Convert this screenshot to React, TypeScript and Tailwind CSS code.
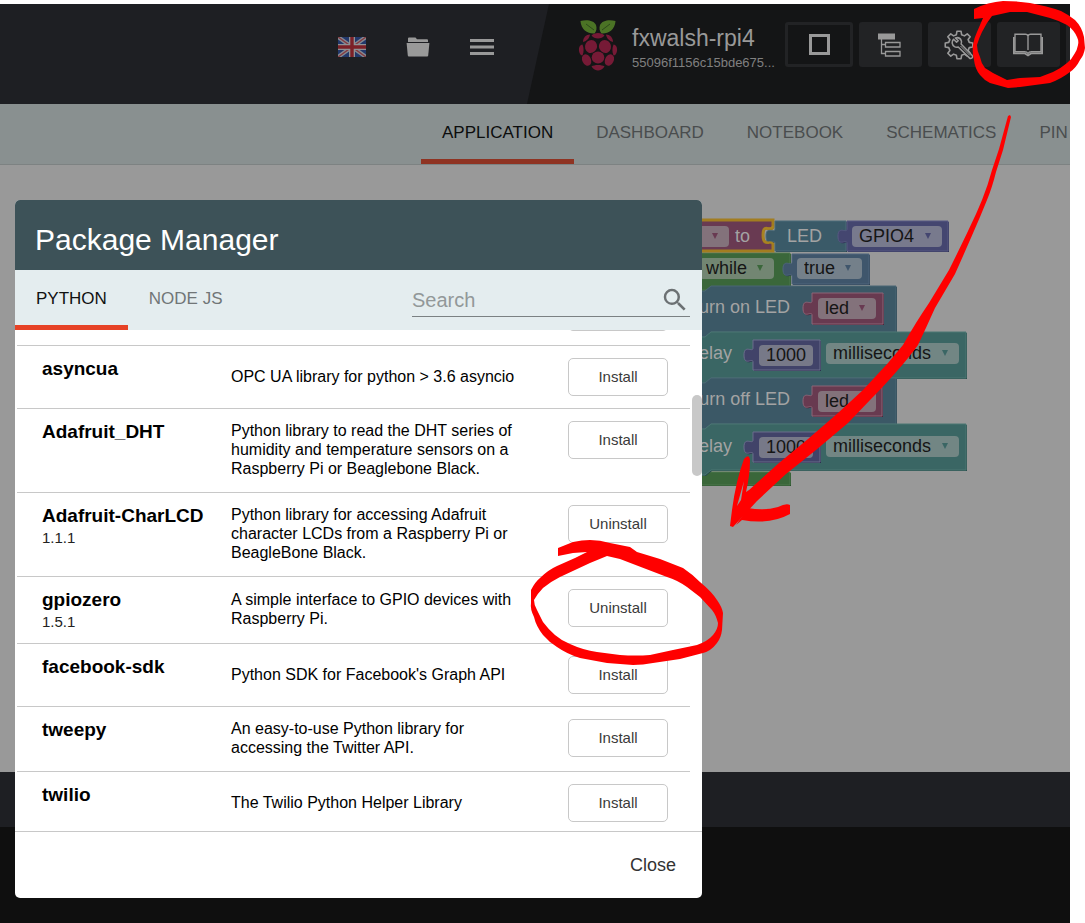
import React from "react";
import { MdSearch } from "react-icons/md";

type Pkg = { name: string; version?: string; description: string; installed?: boolean };

const packages: Pkg[] = [
  { name: "asyncua", description: "OPC UA library for python > 3.6 asyncio" },
  {
    name: "Adafruit_DHT",
    description:
      "Python library to read the DHT series of humidity and temperature sensors on a Raspberry Pi or Beaglebone Black.",
  },
  {
    name: "Adafruit-CharLCD",
    version: "1.1.1",
    description:
      "Python library for accessing Adafruit character LCDs from a Raspberry Pi or BeagleBone Black.",
    installed: true,
  },
  {
    name: "gpiozero",
    version: "1.5.1",
    description: "A simple interface to GPIO devices with Raspberry Pi.",
    installed: true,
  },
  { name: "facebook-sdk", description: "Python SDK for Facebook's Graph API" },
  { name: "tweepy", description: "An easy-to-use Python library for accessing the Twitter API." },
  { name: "twilio", description: "The Twilio Python Helper Library" },
];

function FlagIcon() {
  return (
    <svg viewBox="0 0 28 20" className="h-5 w-7" aria-hidden="true">
      <rect width="28" height="20" fill="#22386b" />
      <path d="M0 0L28 20M28 0L0 20" stroke="#858a92" strokeWidth="4" />
      <path d="M0 0L28 20M28 0L0 20" stroke="#85393f" strokeWidth="1.4" />
      <path d="M14 0V20M0 10H28" stroke="#8f9094" strokeWidth="6" />
      <path d="M14 0V20M0 10H28" stroke="#7c2027" strokeWidth="3.4" />
    </svg>
  );
}

function FolderIcon() {
  return (
    <svg viewBox="0 0 24 20" className="h-5 w-6" fill="#999999" aria-hidden="true">
      <path d="M2 1.5Q2 .5 3 .5H9.5L11 2.3H21Q22 2.3 22 3.3V5H2Z" />
      <path d="M.6 6H23.4L22.2 18.6Q22.1 19.6 21.2 19.6H2.8Q1.9 19.6 1.8 18.6Z" />
    </svg>
  );
}

function MenuIcon() {
  return (
    <svg viewBox="0 0 24 18" className="h-[18px] w-6" fill="#999999" aria-hidden="true">
      <path d="M0 1H24V4H0ZM0 7.5H24V10.5H0ZM0 14H24V17H0Z" />
    </svg>
  );
}

function RaspberryIcon() {
  return (
    <svg viewBox="0 0 40 52" className="h-[52px] w-10 shrink-0" aria-hidden="true">
      <g fill="#4b7325">
        <path d="M2.500 2C8 .3 16 1 18 6C19 9 18.6 12 16.5 14.5C10 15 3 11 2.500 2Z" />
        <path d="M37.500 2C32 .3 24 1 22 6C21 9 21.400 12 23.500 14.500C30 15 37 11 37.500 2Z" />
      </g>
      <path d="M8 5L16 11M32 5L24 11" stroke="#2c4a1b" strokeWidth="1" fill="none" />
      <g fill="#761a36">
        <path d="M13.500 16.500C16 13 24 13 26.500 16.500C24 20.500 16 20.500 13.500 16.500Z" />
        <path d="M5 23C5 18.500 8 15.500 12 15.500C11.500 19 9 22 5 23Z" />
        <path d="M35 23C35 18.500 32 15.500 28 15.500C28.500 19 31 22 35 23Z" />
        <ellipse cx="13" cy="27.500" rx="6" ry="6.500" transform="rotate(25 13 27.500)" />
        <ellipse cx="27" cy="27.500" rx="6" ry="6.500" transform="rotate(-25 27 27.500)" />
        <ellipse cx="20" cy="38.500" rx="6.300" ry="6" />
        <path d="M4.500 25.500C1.500 26 .6 29 1 32C1.500 35 3 36.500 4.500 36.500C6 33 6 29 4.500 25.500Z" />
        <path d="M35.500 25.500C38.500 26 39.400 29 39 32C38.500 35 37 36.500 35.500 36.500C34 33 34 29 35.500 25.500Z" />
        <ellipse cx="8.600" cy="41" rx="4.300" ry="6" transform="rotate(-27 8.600 41)" />
        <ellipse cx="31.400" cy="41" rx="4.300" ry="6" transform="rotate(27 31.400 41)" />
        <path d="M13.500 47.500C16 45.500 24 45.500 26.500 47.500C25 50 22 51.500 20 51.500C18 51.500 15 50 13.500 47.500Z" />
      </g>
    </svg>
  );
}

function TreeIcon() {
  return (
    <svg viewBox="0 0 24 24" className="mr-[3px] size-6" aria-hidden="true">
      <path d="M1 .5H18V6.500H1Z" fill="#999999" />
      <path d="M4.500 6V20.500H8M4.500 11.500H8" stroke="#999999" strokeWidth="1.300" fill="none" />
      <path d="M8.500 9.500H23V14H8.500ZM8.500 18.500H23V23H8.500Z" stroke="#999999" strokeWidth="1.300" fill="none" />
    </svg>
  );
}

const gearPath = (() => {
  const pts: string[] = [];
  for (let i = 0; i < 8; i++) {
    const base = (i * Math.PI) / 4 - Math.PI / 2;
    const steps: [number, number][] = [
      [-0.25, 10.6],
      [-0.15, 13.9],
      [0.15, 13.9],
      [0.25, 10.6],
    ];
    for (const [a, r] of steps) {
      pts.push(`${(15 + r * Math.cos(base + a)).toFixed(2)} ${(15 + r * Math.sin(base + a)).toFixed(2)}`);
    }
  }
  return `M${pts.join("L")}Z`;
})();

function GearIcon() {
  return (
    <svg viewBox="0 0 30 30" className="mr-[2px] size-[30px]" fill="none" stroke="#999999" aria-hidden="true">
      <path d={gearPath} strokeWidth="1.600" strokeLinejoin="round" />
      <path
        d="M9.500 9.200L12.600 12.200L14.200 10.800L11.400 7.900C14 7.200 16.500 8.300 17.300 10.800C17.600 12 17.500 13 17.100 14L28 25.200C28.700 26 28.700 27.200 28 27.900C27.200 28.600 26.100 28.600 25.400 27.900L14.200 17C11.500 18 8.800 16.200 8.300 13.500C8 12 8.500 10.400 9.500 9.200Z"
        fill="#222325"
        strokeWidth="1.500"
        strokeLinejoin="round"
      />
      <path d="M16.500 16L26 25.500" strokeWidth="1" />
    </svg>
  );
}

function BookIcon() {
  return (
    <svg viewBox="0 0 30 24" className="mr-[2px] h-6 w-[30px]" fill="none" stroke="#999999" aria-hidden="true">
      <path
        d="M15 3C14.600 1.700 13.700 1.200 12.500 1.200H2V18.700H11.500C13.300 18.700 14.300 19.200 15 20.500C15.700 19.200 16.700 18.700 18.500 18.700H28V1.200H17.500C16.300 1.200 15.400 1.700 15 3ZM15 3V17"
        strokeWidth="1.400"
      />
      <path d="M.9 4V20.400H12L15 22.500L18 20.400H29.100V4" strokeWidth="1.800" />
    </svg>
  );
}

function HeaderButton({ label, children }: { label: string; children?: React.ReactNode }) {
  return (
    <button
      type="button"
      aria-label={label}
      className="flex h-[45px] w-[63px] shrink-0 items-center justify-center rounded-[3px] bg-[#222325]"
    >
      {children}
    </button>
  );
}

function Header() {
  return (
    <header className="flex h-[100px] overflow-hidden bg-[#1e1f23]">
      <div className="flex w-[527px] shrink-0 items-start justify-end gap-10 pt-[33px] pr-[33px]">
        <button type="button" aria-label="Language"><FlagIcon /></button>
        <button type="button" aria-label="Projects"><FolderIcon /></button>
        <button type="button" aria-label="Menu" className="pt-px"><MenuIcon /></button>
      </div>
      <div className="flex min-w-0 flex-1 items-start overflow-hidden bg-[#141516] pt-[18px] pl-[51px] [clip-path:polygon(22px_0,100%_0,100%_100%,0_100%)]">
        <div className="-mt-[3px]"><RaspberryIcon /></div>
        <div className="ml-[14px] w-[153px] shrink-0">
          <div className="text-[23px] leading-8 text-[#999999]">fxwalsh-rpi4</div>
          <div className="text-[13px] leading-[18px] text-[#808080]">55096f1156c15bde675...</div>
        </div>
        <div className="flex gap-[6px]">
          <button
            type="button"
            aria-label="Stop"
            className="flex h-[45px] w-[68px] shrink-0 items-center justify-center rounded-[3px] border-3 border-[#222325]"
          >
            <span className="size-[21px] border-3 border-[#999999]" />
          </button>
          <HeaderButton label="Structure"><TreeIcon /></HeaderButton>
          <HeaderButton label="Settings"><GearIcon /></HeaderButton>
          <HeaderButton label="Packages"><BookIcon /></HeaderButton>
          <HeaderButton label="More" />
        </div>
      </div>
    </header>
  );
}

function Tabs() {
  return (
    <nav className="flex h-[61px] gap-px overflow-hidden border-b border-[#7d8282] bg-[#899090] pl-[421px] text-[17px] whitespace-nowrap text-[#4a4d4e]">
      <a href="#application" className="border-b-5 border-[#8f3322] px-[21px] pt-[17px] leading-6 text-[#0c0d0d]">APPLICATION</a>
      <a href="#dashboard" className="px-[21px] pt-[17px] leading-6">DASHBOARD</a>
      <a href="#notebook" className="px-[21px] pt-[17px] leading-6">NOTEBOOK</a>
      <a href="#schematics" className="px-[21px] pt-[17px] leading-6">SCHEMATICS</a>
      <a href="#pin-layout" className="px-[21px] pt-[17px] leading-6">PIN</a>
    </nav>
  );
}

function Field({ label, value, className, arrow }: { label: string; value: string; className: string; arrow: string }) {
  return (
    <div className={`absolute h-[21px] rounded-[4px] ${className}`}>
      <select
        aria-label={label}
        className="block h-full w-full appearance-none bg-transparent pl-[7px] text-[18px] leading-[21px] text-[#151515]"
      >
        <option>{value}</option>
      </select>
      <svg viewBox="0 0 6 6" className="pointer-events-none absolute top-[7px] right-[11px] size-[6px]" aria-hidden="true">
        <path d="M0 0H6L3 6Z" fill={arrow} />
      </svg>
    </div>
  );
}

function Block({ d, fill, light, dark }: { d: string; fill: string; light: string; dark: string }) {
  return (
    <g>
      <path d={d} fill={dark} transform="translate(1 1)" />
      <path d={d} fill={fill} stroke={light} strokeWidth="1" />
    </g>
  );
}

const tabLeft = (x: number, y: number, right: number, bottom: number) =>
  `M${x} ${y}H${right}V${bottom}H${x}V${y + 22}C${x} ${y + 17} ${x - 9} ${y + 27} ${x - 9} ${y + 15}C${x - 9} ${y + 4} ${x} ${y + 13} ${x} ${y + 8}Z`;

const statement = (y: number, right: number) =>
  `M690 ${y + 5}H705L711 ${y}H${right}V${y + 46}H711L705 ${y + 51}H690Z`;

function BlockCanvas() {
  return (
    <div className="absolute top-[35px] left-[690px] h-[300px] w-[290px] text-[18px] leading-[21px] text-[#a3a3a3]">
      <svg viewBox="690 200 290 300" className="h-[300px] w-[290px]" aria-hidden="true">
        <Block d="M690 253H790V290H690Z" fill="#3a673a" light="#4d784d" dark="#28512a" />
        <Block d={tabLeft(792, 254, 869, 284)} fill="#3f566c" light="#4e657c" dark="#2f4254" />
        <Block d={statement(286, 896)} fill="#3b5866" light="#4a6674" dark="#2a424e" />
        <Block d={statement(332, 966)} fill="#3a6664" light="#4a7673" dark="#2a4f4d" />
        <Block d={statement(378, 896)} fill="#3b5866" light="#4a6674" dark="#2a424e" />
        <Block d="M690 472H790V485H690Z" fill="#3a673a" light="#4d784d" dark="#28512a" />
        <Block d={statement(424, 966)} fill="#3a6664" light="#4a7673" dark="#2a4f4d" />
        <path d="M690 220H773V227C771 233 763 222 763 235C763 248 771 239 773 244V251H690Z" fill="#693a52" stroke="#a27d20" strokeWidth="3" />
        <Block d={tabLeft(775, 221, 846, 251)} fill="#3a5a68" light="#4a6a78" dark="#29454f" />
        <path d="M773 226C771 233 763 222 763 235C763 248 771 239 773 244" fill="none" stroke="#a98322" strokeWidth="2" />
        <Block d={tabLeft(847, 221, 948, 251)} fill="#444670" light="#565882" dark="#313359" />
        <Block d={tabLeft(812, 293, 883, 324)} fill="#683a50" light="#8c6476" dark="#4e263b" />
        <Block d={tabLeft(753, 340, 820, 370)} fill="#414369" light="#6a6d8c" dark="#2e3050" />
        <Block d={tabLeft(812, 386, 882, 416)} fill="#683a50" light="#8c6476" dark="#4e263b" />
        <Block d={tabLeft(753, 432, 820, 462)} fill="#414369" light="#6a6d8c" dark="#2e3050" />
      </svg>

      <Field label="Variable to set" value="" arrow="#693a52" className="top-[26px] left-0 w-[39px] bg-[#83727b]" />
      <span className="absolute top-[26px] left-[45px]">to</span>
      <span className="absolute top-[26px] left-[97px]">LED</span>
      <Field label="LED pin" value="GPIO4" arrow="#444670" className="top-[26px] left-[162px] w-[90px] bg-[#787a8d]" />
      <Field label="Loop mode" value="while" arrow="#3a673a" className="top-[58px] left-[9px] w-[75px] bg-[#728672]" />
      <Field label="Condition" value="true" arrow="#3f566c" className="top-[58px] left-[107px] w-[65px] bg-[#74808a]" />
      <span className="absolute top-[97px] right-[190px] whitespace-nowrap">turn on LED</span>
      <Field label="LED to turn on" value="led" arrow="#693a52" className="top-[98px] left-[128px] w-[58px] bg-[#83727b]" />
      <span className="absolute top-[143px] right-[248px]">delay</span>
      <input aria-label="First delay" defaultValue="1000" className="absolute top-[145px] left-[69px] h-[21px] w-[54px] rounded-[4px] bg-[#777988] pl-[7px] text-[#151515]" />
      <Field label="First delay unit" value="milliseconds" arrow="#3a6664" className="top-[143px] left-[136px] w-[133px] bg-[#728684]" />
      <span className="absolute top-[189px] right-[190px] whitespace-nowrap">turn off LED</span>
      <Field label="LED to turn off" value="led" arrow="#693a52" className="top-[191px] left-[128px] w-[58px] bg-[#83727b]" />
      <span className="absolute top-[236px] right-[248px]">delay</span>
      <input aria-label="Second delay" defaultValue="1000" className="absolute top-[237px] left-[69px] h-[21px] w-[54px] rounded-[4px] bg-[#777988] pl-[7px] text-[#151515]" />
      <Field label="Second delay unit" value="milliseconds" arrow="#3a6664" className="top-[236px] left-[136px] w-[133px] bg-[#728684]" />
    </div>
  );
}

const actionButton =
  "block h-[38px] w-[100px] rounded-[5px] border border-[#c8c8c8] bg-white text-[15px] text-[#3a3a3a]";

function PackageManager() {
  return (
    <div
      role="dialog"
      aria-labelledby="pm-title"
      className="absolute top-[200px] left-[15px] flex h-[698px] w-[687px] flex-col overflow-hidden rounded-[5px] bg-white"
    >
      <h1 id="pm-title" className="bg-[#3d5258] px-5 pt-[22px] pb-3 text-[30px] leading-9 text-white">
        Package Manager
      </h1>
      <div className="flex h-[60px] shrink-0 justify-between bg-[#e4edef] pr-3">
        <div className="flex text-[17px] leading-6 text-[#717677]">
          <button type="button" className="flex items-start border-b-5 border-[#e64226] px-[21px] pt-[17px] text-[#111111]">PYTHON</button>
          <button type="button" className="flex items-start px-[21px] pt-[17px]">NODE JS</button>
        </div>
        <label className="mt-[14px] flex h-[33px] w-[278px] items-center border-b border-[#7b8183]">
          <input
            type="search"
            aria-label="Search packages"
            placeholder="Search"
            className="min-w-0 flex-1 bg-transparent text-[20px] text-[#333333] outline-none placeholder:text-[#929899]"
          />
          <MdSearch className="size-[30px] text-[#6c7173]" aria-hidden="true" />
        </label>
      </div>
      <div className="relative min-h-0 flex-1 overflow-hidden">
        <table className="-mt-[49px] ml-[2px] w-[673px] table-fixed border-separate border-spacing-0 text-left text-black">
          <colgroup>
            <col className="w-[204px]" />
            <col />
            <col className="w-[122px]" />
          </colgroup>
          <tbody>
            <tr>
              <td className="h-[65px] border-b border-[#c8c8c8]" />
              <td className="border-b border-[#c8c8c8]" />
              <td className="border-b border-[#c8c8c8] pt-3 align-top">
                <button type="button" aria-label="Install package" className={actionButton} />
              </td>
            </tr>
            {packages.map((p) => (
              <tr key={p.name}>
                <th scope="row" className="border-b border-[#c8c8c8] pt-[11px] pb-3 pl-[25px] align-top font-normal">
                  <div className="text-[19px] leading-6 font-bold">{p.name}</div>
                  {p.version && <div className="text-[15px] leading-[19px] text-[#222222]">{p.version}</div>}
                </th>
                <td className="border-b border-[#c8c8c8] pt-3 pr-8 pb-[14px] pl-[10px] align-middle text-[16px] leading-[19px]">
                  {p.description}
                </td>
                <td className="border-b border-[#c8c8c8] py-3 align-top">
                  <button type="button" className={actionButton}>{p.installed ? "Uninstall" : "Install"}</button>
                </td>
              </tr>
            ))}
          </tbody>
        </table>
        <div className="absolute top-[65px] right-0 h-[81px] w-[10px] rounded-full bg-[#c8c8c8]" />
      </div>
      <div className="flex h-[67px] shrink-0 items-center justify-end border-t border-[#c8c8c8] pr-[26px]">
        <button type="button" className="text-[18px] text-[#333333]">Close</button>
      </div>
    </div>
  );
}

function Annotations() {
  return (
    <svg viewBox="0 0 1085 923" className="pointer-events-none absolute top-0 left-0 h-[923px] w-[1085px]" fill="#ff0000" aria-hidden="true">
      <path
        fillRule="evenodd"
        d="M974 9Q988 2 1003 1Q1018 1 1030 3Q1047 6 1061 11Q1069 15 1075 20Q1082 27 1084 37L1085 48Q1084 55 1080 60Q1076 68 1070 72Q1061 79 1050 83L1020 87L1008 88L990 83Q984 80 980 75Q975 69 974 60Q972 52 973 45Q974 38 977 32L983 18L974 19ZM992 16L1010 12L1027 12L1050 18Q1060 21 1067 25Q1074 30 1077 37Q1079 41 1078 45Q1077 50 1075 53Q1072 59 1067 63Q1060 69 1053 72L1040 77L1020 78L1007 80L993 73L985 68Q981 63 980 57Q977 51 977 45Q979 38 982 32L987 23Z"
      />
      <path d="M1008 116L1010 115L1011 117L1003 150L996 172Q992 188 987 200L980 217Q968 245 955 274L935 308Q926 328 918 345Q907 360 897 371Q883 387 871 399L848 423L816 450L786 474L757 501L733 527L730 526L732 510Q736 480 744 459Q749 453 750 460Q750 475 746 492L749 490L779 463L808 439L838 413L863 390L888 363L903 345Q916 322 929 303L949 270Q964 240 976 214L982 200Q988 185 992 170L999 149Z" />
      <path d="M744 481L737 506L741 500Z" fill="#999999" />
      <path d="M736 525L748 508Q764 511 778 507Q786 503 790 505V514Q770 525 742 520Z" />
      <path
        fillRule="evenodd"
        d="M558 548L573 542Q582 540 590 540Q600 540 610 543L630 547L637 552L660 559L683 568Q692 574 700 582Q712 592 717 600Q722 607 723 613L722 630Q721 638 717 643Q711 651 703 653L680 659L653 663Q643 665 633 665L607 663L580 658Q567 654 557 647Q549 642 543 635Q536 626 534 617Q530 609 531 603V590Q535 582 540 578Q548 570 557 566L575 558L587 552L573 553L558 556ZM607 556L590 563L575 570L560 577Q550 582 543 588Q538 593 534 600Q534 605 537 610L543 622Q549 630 555 635Q562 641 570 644Q583 650 597 652L620 655Q636 656 650 655L673 650L697 645Q708 641 713 635Q718 629 718 623Q716 615 712 610L700 597L687 587Q677 580 667 577L633 564L620 559Z"
      />
    </svg>
  );
}

export default function App() {
  return (
    <div className="relative min-h-screen overflow-hidden bg-white pt-1 pr-[15px] font-['Liberation_Sans',Arial,sans-serif]">
      <Header />
      <Tabs />
      <main className="relative h-[607px] overflow-hidden bg-[#999999]">
        <BlockCanvas />
      </main>
      <footer>
        <div className="h-[55px] bg-[#1e1f23]" />
        <div className="h-24 bg-[#0f0f0f]" />
      </footer>
      <PackageManager />
      <Annotations />
    </div>
  );
}
